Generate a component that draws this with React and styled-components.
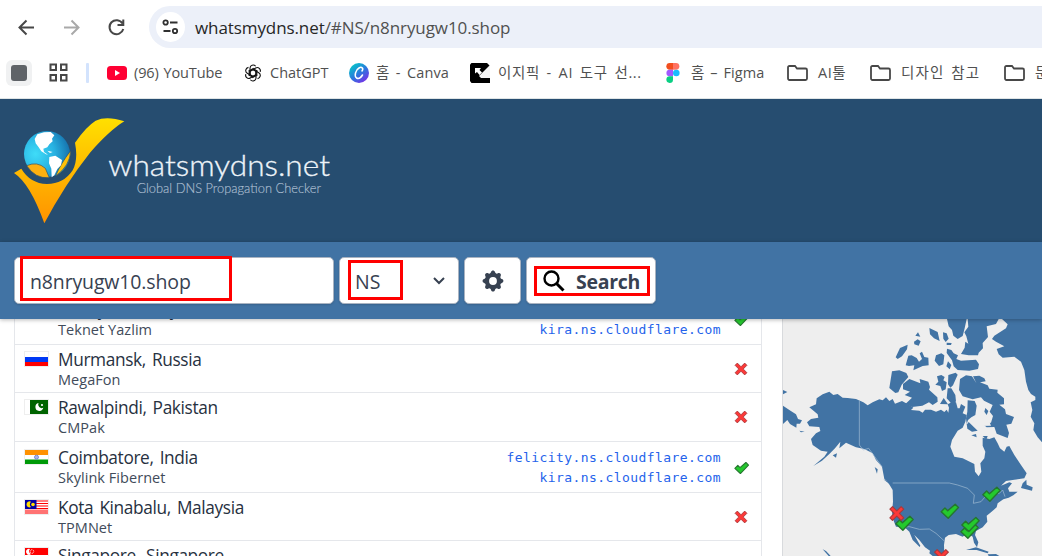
import React from "react";
import styled, { createGlobalStyle } from "styled-components";

const Global = createGlobalStyle`
  * { box-sizing: border-box; }
  body { margin: 0; background: #fff; overflow: hidden; }
`;

const Page = styled.div`
  width: 1042px;
  height: 556px;
  overflow: hidden;
  display: flex;
  flex-direction: column;
  color: #1f2937;
  font-family: "Open Sans", "Noto Sans CJK KR", sans-serif;
`;

const Toolbar = styled.div`
  display: flex;
  align-items: center;
  flex: 0 0 54px;
  padding-left: 14px;
  gap: 21px;
  background: #fff;
`;
const NavButton = styled.span`
  display: flex;
  width: 24px;
  height: 24px;
  color: ${(p) => (p.$off ? "#a9a9a9" : "#474747")};
`;
const Address = styled.div`
  display: flex;
  align-items: center;
  flex: 1;
  height: 42px;
  padding-left: 7px;
  gap: 10px;
  border-radius: 21px 0 0 21px;
  background: #ecf0f9;
`;
const SiteInfo = styled.span`
  display: flex;
  align-items: center;
  justify-content: center;
  width: 29px;
  height: 30px;
  border-radius: 50%;
  background: #fff;
`;
const Url = styled.span`
  font-size: 17px;
  letter-spacing: -0.09px;
  color: #505050;
  white-space: nowrap;
  b { font-weight: 400; color: #262626; }
`;

const Bookmarks = styled.div`
  display: flex;
  align-items: center;
  flex: 0 0 45px;
  padding: 0 0 7px 6px;
  border-bottom: 1px solid #dfe5e6;
  background: #fff;
  overflow: hidden;
`;
const GroupChip = styled.span`
  display: flex;
  align-items: center;
  justify-content: center;
  flex: none;
  width: 26px;
  height: 26px;
  border-radius: 6px;
  background: #f0f1f2;
  &::before {
    content: "";
    width: 16px;
    height: 16px;
    border-radius: 3px;
    background: #5f6368;
  }
`;
const AppsIcon = styled.svg`
  flex: none;
  margin-left: 17px;
`;
const Divider = styled.span`
  flex: none;
  width: 3px;
  height: 20px;
  margin: 0 18px 0 18px;
  border-radius: 1px;
  background: #d3e3fd;
`;
const Bookmark = styled.span`
  display: flex;
  align-items: center;
  flex: none;
  width: ${(p) => p.$w}px;
  gap: ${(p) => p.$gap ?? 7}px;
  font-size: 14.5px;
  line-height: 20px;
  letter-spacing: ${(p) => p.$ls ?? 0}px;
  word-spacing: ${(p) => p.$ws ?? 0}px;
  color: #505050;
  white-space: nowrap;
  svg { flex: none; }
`;

const Header = styled.header`
  flex: 0 0 143px;
  padding: 18px 0 0 14px;
  background: #264d70;
  svg { display: block; }
`;

const SearchBar = styled.div`
  position: relative;
  z-index: 1;
  display: flex;
  flex: 0 0 77px;
  gap: 5px;
  padding: 15px 0 15px 14px;
  background: #4173a4;
  box-shadow: 0 1px 4px rgba(0, 0, 0, 0.28);
`;
const Control = styled.div`
  display: flex;
  align-items: center;
  width: ${(p) => p.$w}px;
  height: 47px;
  padding: 0 ${(p) => p.$right ?? 13}px 0 ${(p) => p.$left ?? 15}px;
  justify-content: ${(p) => p.$justify ?? "space-between"};
  border: 1px solid #a9b3c1;
  border-radius: 5px;
  background: #fff;
  box-shadow: 0 1px 2px rgba(0, 0, 0, 0.15);
  color: #374151;
  font-size: 19.5px;
  font-weight: ${(p) => (p.$bold ? 700 : 400)};
  letter-spacing: ${(p) => p.$ls ?? 0}px;
  line-height: 26px;
  white-space: nowrap;
  span { padding-top: 3px; }
  svg { flex: none; }
`;
const Marker = styled.span`
  position: absolute;
  left: ${(p) => p.$x}px;
  top: ${(p) => p.$y}px;
  width: ${(p) => p.$w}px;
  height: ${(p) => p.$h}px;
  border: 3px solid #f00;
`;

const Content = styled.main`
  display: flex;
  gap: 20px;
  flex: 1;
  min-height: 0;
  padding-left: 14px;
  overflow: hidden;
`;
const Results = styled.div`
  width: 748px;
  margin-top: -25px;
  border: solid #e5e7eb;
  border-width: 0 1px;
`;
const Row = styled.div`
  display: flex;
  height: ${(p) => p.$h}px;
  padding: ${(p) => (p.$h > 50 ? 5 : 4)}px 12px 0 9px;
  border-bottom: 1px solid #e5e7eb;
`;
const FlagBox = styled.svg`
  flex: none;
  width: 25px;
  height: 16px;
  margin-top: 2px;
  border: 1px solid #eee;
`;
const Place = styled.div`
  flex: 1;
  padding-left: 9px;
  white-space: nowrap;
`;
const City = styled.div`
  font-size: 17.3px;
  line-height: 22px;
  letter-spacing: -0.37px;
  word-spacing: 2px;
  color: #27313f;
`;
const Provider = styled.div`
  margin-top: -1px;
  font-size: 14.5px;
  line-height: 19px;
  letter-spacing: 0.05px;
  color: #414b5a;
`;
const Servers = styled.div`
  padding-top: 1px;
  font-family: "DejaVu Sans Mono", monospace;
  font-size: 13px;
  line-height: 20px;
  letter-spacing: 0.42px;
  text-align: right;
  color: #2563eb;
`;
const Status = styled.span`
  display: flex;
  align-items: center;
  justify-content: center;
  align-self: center;
  width: 16px;
  margin: -4px 0 0 12px;
  svg { flex: none; }
`;
const MapPanel = styled.div`
  flex: 1;
  border-left: 1px solid #d8dadd;
  background: #eee;
  svg { display: block; }
`;

const stroke = { fill: "none", stroke: "currentColor", strokeWidth: 2 };

const TICK = "M2 10 L6 6 L9 9 L17 2 L20.500 5.500 L9.500 17 Z";
const CROSS = "M1 4 L4 1 L9 6 L14 1 L17 4 L12 9 L17 14 L14 17 L9 12 L4 17 L1 14 L6 9 Z";

function StatusShape({ ok }) {
  return (
    <path d={ok ? TICK : CROSS} fill={ok ? "#24c92d" : "#fb3938"} stroke={ok ? "#25762f" : "#a8383b"} strokeWidth={ok ? 1.5 : 1.2} strokeLinejoin="round" />
  );
}
function StatusIcon({ ok }) {
  return ok ? (
    <svg width="17" height="14" viewBox="0 0 22 19"><StatusShape ok /></svg>
  ) : (
    <svg width="14" height="14" viewBox="-0.500 -0.500 19 19"><StatusShape /></svg>
  );
}

function Folder() {
  return (
    <svg width="21" height="16" viewBox="0 0 21 16">
      <path d="M1 13V2.500Q1 1 2.500 1H8L10 3.500H18.500Q20 3.500 20 5V13.500Q20 15 18.500 15H2.500Q1 15 1 13Z" fill="none" stroke="#474747" strokeWidth="1.800" />
    </svg>
  );
}

function Flag({ country }) {
  const art = {
    tr: (<><path d="M0 0h23v14H0z" fill="#e30a17" /><circle cx="8" cy="7" r="3.500" fill="#fff" /><circle cx="9" cy="7" r="2.800" fill="#e30a17" /></>),
    ru: (<><path d="M0 5h23v5H0z" fill="#0039f5" /><path d="M0 10h23v4H0z" fill="#f00" /></>),
    pk: (<><path d="M5 0h18v14H5z" fill="#006400" /><path d="M13.500 3A4 4 0 1 0 18.300 7.800A3.600 3.600 0 0 1 13.500 3Z" fill="#fff" /><circle cx="17" cy="5" r="1.100" fill="#fff" /></>),
    in: (<><path d="M0 0h23v5H0z" fill="#ff9100" /><path d="M0 9.500h23V14H0z" fill="#009a08" /><circle cx="11.500" cy="7.200" r="2" fill="#aab4e6" stroke="#6677cc" strokeWidth=".8" /></>),
    my: (<><path d="M0 1h23M0 3.500h23M0 6h23M0 8.500h23" stroke="#f00" strokeWidth="1.200" /><path d="M0 9.500h23V14H0z" fill="#ff7373" /><path d="M0 0h11.500v9H0z" fill="#0000a5" /><path d="M6 1.800A3 3 0 1 0 6 7A3.500 3.500 0 0 1 6 1.800" fill="#fd0" /><circle cx="8" cy="4.500" r="1.800" fill="#fd0" /></>),
    sg: (<><path d="M0 0h23v7H0z" fill="#f00" /><path d="M5 1A3 3 0 1 0 6 6A3 3 0 0 1 5 1" fill="#fff" /><circle cx="7" cy="3.500" r="1.800" fill="none" stroke="#fff" strokeWidth=".9" strokeDasharray="1 .7" /></>),
  };
  return <FlagBox viewBox="0 0 23 14" preserveAspectRatio="none">{art[country]}</FlagBox>;
}

function Logo() {
  return (
    <svg width="320" height="107" viewBox="42 51 960 321">
      <defs>
        <linearGradient id="gold" x1="0" y1="0" x2="0" y2="1">
          <stop offset="0" stopColor="#ffe000" />
          <stop offset="1" stopColor="#ff9200" />
        </linearGradient>
        <radialGradient id="sea" cx=".25" cy=".5" r=".75">
          <stop offset="0" stopColor="#3fdcf8" />
          <stop offset=".55" stopColor="#28b2e2" />
          <stop offset="1" stopColor="#1673ae" />
        </radialGradient>
      </defs>
      <circle cx="141" cy="162" r="69" fill="url(#sea)" />
      <path d="M80 197Q112 183 136 205L148 233Q106 237 80 197Z" fill="#fdb010" stroke="#264d70" strokeWidth="2" />
      <path d="M212 152Q210 198 167 228Q180 194 212 152Z" fill="#ffc108" stroke="#264d70" strokeWidth="2" />
      <path d="M104 117L112 103L132 97L152 96L163 106L156 116L158 124L148 133L142 142L130 146L132 156L144 164L138 163L124 154L116 142L107 130Z M148 171L166 167L186 180L183 196L172 207L163 226L155 232L154 206L147 190Z M142 152L158 156L150 159Z" fill="#fff" />
      <path d="M42 219L64 206Q90 250 141 252Q191 252 218 211Q235 180 225 128Q258 80 287 62Q320 47 373 64Q330 90 270 158Q194 254 133 370Q90 250 42 219Z" fill="url(#gold)" />
      <text x="325" y="227" textLength="665" lengthAdjust="spacingAndGlyphs" fontFamily="Lato, sans-serif" fontWeight="300" fontSize="91" fill="#edf3f8" stroke="#edf3f8" strokeWidth="1">whatsmydns.net</text>
      <text x="410" y="279" textLength="553" lengthAdjust="spacingAndGlyphs" fontFamily="Lato, sans-serif" fontWeight="300" fontSize="40" fill="#a9bccf" stroke="#a9bccf" strokeWidth=".5">Global DNS Propagation Checker</text>
    </svg>
  );
}

const LAND = [
  // mainland
  "M160 230L172 240L185 237L200 248L215 249L240 252L262 262L275 271L290 262L310 253L320 256L330 247L340 258L350 252L357 266L378 258L400 270L412 278L405 285L430 287L440 293L447 284L465 284L480 290L495 284L505 291L512 284L517 293L519 278L515 268L530 260L540 262L545 280L551 280L555 267L568 275L560 295L572 300L568 320L560 338L545 347L528 375L523 395L535 425L560 430L595 447L597 470L608 484L616 470L613 445L625 430L628 410L620 392L620 368L640 372L655 367L665 385L672 400L685 410L692 395L700 393L715 420L735 450L752 475L745 490L715 494L690 498L675 512L700 502L708 505L696 520L700 530L725 530L712 541L698 548L682 553L665 565L662 577L645 592L632 602L634 620L620 637L600 648L597 660L607 682L603 697L594 683L590 665L575 655L560 665L540 657L518 660L507 668L504 690L505 723L470 723L460 715L462 707L447 697L430 675L415 660L408 648L433 692L431 696L410 675L400 650L385 636L360 635L350 610L348 590L351 560L350 525L335 500L325 492L318 455L300 435L290 415L265 402L240 397L210 383L190 400L193 380L177 400L160 417L138 437L112 453L145 425L155 410L135 407L110 390L105 372L120 355L133 348L130 336L100 334L93 322L105 312L127 308L125 298L100 277L120 268L122 250L140 238Z",
  // Greenland
  "M678 12L695 28L690 40L655 62L648 72L660 80L685 94L662 102L668 118L680 128L715 125L735 140L745 165L750 200L757 225L765 237L778 245L778 255L764 262L769 285L764 305L775 325L772 345L785 367L798 382V12Z",
  // Chukotka and small islands
  "M21 272L40 285L60 298L66 312L78 316L72 326L62 326L61 338L42 327L34 315L21 327Z M21 225L34 231L21 238Z M70 347L86 350L75 352Z",
  // Arctic archipelago
  "M513 12H572L566 40L560 63L545 72L532 62L528 45L518 34Z M575 12H668L660 27L632 34L636 66L620 84L621 100L608 113L606 121L578 121L555 117L566 98L568 80L577 86L571 64L565 52L577 35Z",
  "M460 39L485 51L491 78L474 70L462 58Z M501 52L512 55L518 71L509 81L502 71Z M418 62L426 52L433 65Z M414 80L425 73L434 79L428 92L415 88Z M359 127L372 99L395 89L393 103L378 124L365 132Z",
  "M389 151L397 122L407 121L422 129L429 140L438 132L431 115L438 110L445 126L457 128L458 151L440 153L412 166L415 151L399 153Z M476 137L480 121L496 115L505 121L502 148L489 153Z M513 101L526 105L533 115L546 121L541 132L555 137L600 134L609 148L606 162L580 167L545 165L533 154L528 136L512 114Z M516 139L526 150L521 163L511 154Z M512 83L527 84L525 90L512 90Z",
  "M348 169L370 166L391 174L397 186L377 209L367 232L358 234L340 219Z M381 207L400 192L433 205L431 192L457 200L462 216L459 224L484 247L485 260L470 270L459 262L439 272L408 276L389 266L408 248L386 240L402 230L381 223Z",
  "M478 209L487 200L483 184L496 180L506 186L502 196L512 202L509 223L498 228L493 213Z M516 208L517 180L539 173L545 179L531 211L523 218Z M515 220L526 220L538 240L540 259L530 270L512 250Z M492 267L503 249L516 268Z",
  "M552 192L570 181L588 184L601 204L591 184L610 182L625 190L629 199L612 202L635 211L640 221L665 224L664 233L684 250L684 268L670 269L687 283L690 297L714 306L706 326L691 329L699 354L695 369L662 356L655 336L632 337L619 326L645 323L651 303L641 290L650 270L624 257L615 247L590 253L560 244L549 225Z",
  "M575 256L596 258L602 272L598 300L586 307L576 315L571 331L578 321L605 347L588 350L574 341L570 310L574 290Z M628 279L637 288L632 300L625 290Z M586 361L600 357L602 367Z M620 363L635 363L631 374Z",
  // Newfoundland, Caribbean, Pacific
  "M740 505L751 494L752 509L770 517L768 527L735 519Z M570 705L600 697L638 710L635 715L602 705Z M635 718L660 717L670 723H638Z M140 703L150 708L164 723H158Z M296 456L305 463L303 476Z M322 493L342 502L361 520L345 511Z M170 421L183 415L180 428Z",
];

const PINS = [
  [615, 511, 1], [490, 562, 1], [354, 598, 1], [549, 622, 1], [552, 602, 1], [339, 572, 0], [473, 701, 0],
];

function WorldMap() {
  return (
    <svg width="259" height="237" viewBox="21 12 777 711">
      {LAND.map((d) => <path key={d.slice(0, 16)} d={d} fill="#4173a4" />)}
      <path d="M607 312L635 307L645 332L612 333Z" fill="#eee" />
      <path d="M250 256V390L262 405L278 400L318 455M350 504H520L545 510L575 520L595 540L592 565L615 560L632 540L670 535L680 525M382 636L400 635L430 643L460 642L480 655L505 678M680 525L687 545" fill="none" stroke="#a5bed4" strokeWidth="2" />
      {PINS.map(([x, y, ok]) => (
        <g key={`${x}-${y}`} transform={`translate(${x} ${y}) scale(${ok ? 2.8 : 2.6})`}><StatusShape ok={Boolean(ok)} /></g>
      ))}
    </svg>
  );
}

const ROWS = [
  { h: 51, flag: "tr", city: "Antalya, Turkey", isp: "Teknet Yazlim", ns: true },
  { h: 48, flag: "ru", city: "Murmansk, Russia", isp: "MegaFon" },
  { h: 49, flag: "pk", city: "Rawalpindi, Pakistan", isp: "CMPak" },
  { h: 51, flag: "in", city: "Coimbatore, India", isp: "Skylink Fibernet", ns: true },
  { h: 48, flag: "my", city: "Kota Kinabalu, Malaysia", isp: "TPMNet" },
  { h: 49, flag: "sg", city: "Singapore, Singapore", isp: "" },
];

export default function App() {
  return (
    <Page>
      <Global />
      <Toolbar>
        <NavButton><svg width="24" height="24" viewBox="0 0 24 24" {...stroke}><path d="M20 12.500H6M12.500 5.500L5.500 12.500L12.500 19.500" /></svg></NavButton>
        <NavButton $off><svg width="24" height="24" viewBox="0 0 24 24" {...stroke}><path d="M5 12.500H19M12.500 5.500L19.500 12.500L12.500 19.500" /></svg></NavButton>
        <NavButton><svg width="24" height="24" viewBox="0 0 24 24" {...stroke}><path d="M18.500 8.500A7 7 0 1 0 19.300 14M19.300 4.500V10H13.500" /></svg></NavButton>
        <Address>
          <SiteInfo>
            <svg width="17" height="16" viewBox="0 0 17 16" fill="none" stroke="#303030" strokeWidth="1.800"><circle cx="3.600" cy="3.500" r="2.200" /><path d="M8 3.500H15.500M1.500 12H8.500" /><circle cx="13" cy="12" r="2.200" /></svg>
          </SiteInfo>
          <Url><b>whatsmydns.net</b>/#NS/n8nryugw10.shop</Url>
        </Address>
      </Toolbar>
      <Bookmarks>
        <GroupChip />
        <AppsIcon width="19" height="19" viewBox="0 0 19 19" fill="none" stroke="#474747" strokeWidth="2"><path d="M1.500 1.500h5.500v5.500h-5.500zM12 1.500h5.500v5.500h-5.500zM1.500 12h5.500v5.500h-5.500zM12 12h5.500v5.500h-5.500z" /></AppsIcon>
        <Divider />
        <Bookmark $w={137} $ls={-0.1} $ws={1}>
          <svg width="20" height="14" viewBox="0 0 20 14"><rect width="20" height="14" rx="3.500" fill="#ff0033" /><path d="M8 4L13 7L8 10Z" fill="#fff" /></svg>
          (96) YouTube
        </Bookmark>
        <Bookmark $w={105} $gap={8}>
          <svg width="18" height="18" viewBox="0 0 24 24" fill="none" stroke="#111" strokeWidth="1.500">
            {[0, 60, 120, 180, 240, 300].map((a) => <path key={a} d="M12 7.500L16 9.800V15.500L11 18.500M8 9.500V5.500C8 1.500 13 0 15.500 3" transform={`rotate(${a} 12 12)`} />)}
          </svg>
          ChatGPT
        </Bookmark>
        <Bookmark $w={121} $ls={0.15} $ws={2.4}>
          <svg width="20" height="20" viewBox="0 0 20 20">
            <defs><linearGradient id="canva" x1=".1" y1=".1" x2=".8" y2="1"><stop offset="0" stopColor="#05c7c8" /><stop offset=".5" stopColor="#2a79dd" /><stop offset="1" stopColor="#7d2ae8" /></linearGradient></defs>
            <circle cx="10" cy="10" r="10" fill="url(#canva)" /><path d="M13 8C15 5 12.500 3.500 10 5C6.500 7 5 13 7.500 15C9.500 16 12 14.500 13.500 12" fill="none" stroke="#fff" strokeWidth="1.500" strokeLinecap="round" />
          </svg>
          홈 - Canva
        </Bookmark>
        <Bookmark $w={196} $gap={8} $ls={0.6} $ws={2.4}>
          <svg width="20" height="20" viewBox="0 0 20 20"><path d="M1.500 0H17L20 3V20H1.500L0 18V1.500Z" fill="#000" /><path d="M20 2L9 13L11 15H20Z" fill="#f5f5f5" /><path d="M5 5H11L9.500 7L12 9.500L9.500 12L7 9L5 10.500Z" fill="#fff" /></svg>
          이지픽 - AI 도구 선...
        </Bookmark>
        <Bookmark $w={121} $gap={11} $ls={0.1} $ws={2}>
          <svg width="14" height="20" viewBox="0 0 14 20"><path d="M7 0H3.700a3.300 3.300 0 0 0 0 6.700H7Z" fill="#f24e1e" /><path d="M7 0h3a3.300 3.300 0 0 1 0 6.700H7Z" fill="#ff7262" /><path d="M7 6.700H3.700a3.300 3.300 0 0 0 0 6.600H7Z" fill="#a259ff" /><circle cx="10.300" cy="10" r="3.300" fill="#1abcfe" /><path d="M7 13.300H3.700A3.300 3.300 0 1 0 7 16.700Z" fill="#0acf83" /></svg>
          홈 – Figma
        </Bookmark>
        <Bookmark $w={83} $gap={10} $ls={0.5}><Folder />AI툴</Bookmark>
        <Bookmark $w={134} $gap={10} $ls={1.1} $ws={2}><Folder />디자인 참고</Bookmark>
        <Bookmark $w={60} $gap={10}><Folder />문서</Bookmark>
      </Bookmarks>
      <Header><Logo /></Header>
      <SearchBar>
        <Control $w={320} $ls={-0.14}><span>n8nryugw10.shop</span></Control>
        <Control $w={120} $left={15}>
          <span>NS</span>
          <svg width="12" height="8" viewBox="0 0 12 8" {...stroke}><path d="M1 1L6 6L11 1" /></svg>
        </Control>
        <Control $w={57} $left={0} $right={0} $justify="center">
          <svg width="26" height="26" viewBox="0 0 20 20" fill="#374151"><path fillRule="evenodd" clipRule="evenodd" d="M11.490 3.170c-.38-1.560-2.600-1.560-2.980 0a1.532 1.532 0 01-2.286.948c-1.372-.836-2.942.734-2.106 2.106.54.886.061 2.042-.947 2.287-1.561.379-1.561 2.600 0 2.978a1.532 1.532 0 01.947 2.287c-.836 1.372.734 2.942 2.106 2.106a1.532 1.532 0 012.287.947c.379 1.561 2.600 1.561 2.978 0a1.533 1.533 0 012.287-.947c1.372.836 2.942-.734 2.106-2.106a1.533 1.533 0 01.947-2.287c1.561-.379 1.561-2.600 0-2.978a1.532 1.532 0 01-.947-2.287c.836-1.372-.734-2.942-2.106-2.106a1.532 1.532 0 01-2.287-.947zM10 13a3 3 0 100-6 3 3 0 000 6z" /></svg>
        </Control>
        <Control $w={130} $bold $left={16} $right={15} $ls={-0.3}>
          <svg width="22" height="22" viewBox="0 0 22 22" fill="none" stroke="#000" strokeWidth="2.400"><circle cx="8.500" cy="8.500" r="7" /><path d="M13.500 13.500L20.500 20.500" strokeWidth="3" /></svg>
          <span>Search</span>
        </Control>
        <Marker $x={20} $y={14} $w={212} $h={45} />
        <Marker $x={348} $y={18} $w={55} $h={40} />
        <Marker $x={534} $y={24} $w={116} $h={30} />
      </SearchBar>
      <Content>
        <Results>
          {ROWS.map((r) => (
            <Row key={r.city} $h={r.h}>
              <Flag country={r.flag} />
              <Place><City>{r.city}</City><Provider>{r.isp}</Provider></Place>
              {r.ns && <Servers>felicity.ns.cloudflare.com<br />kira.ns.cloudflare.com</Servers>}
              <Status><StatusIcon ok={r.ns} /></Status>
            </Row>
          ))}
        </Results>
        <MapPanel><WorldMap /></MapPanel>
      </Content>
    </Page>
  );
}
